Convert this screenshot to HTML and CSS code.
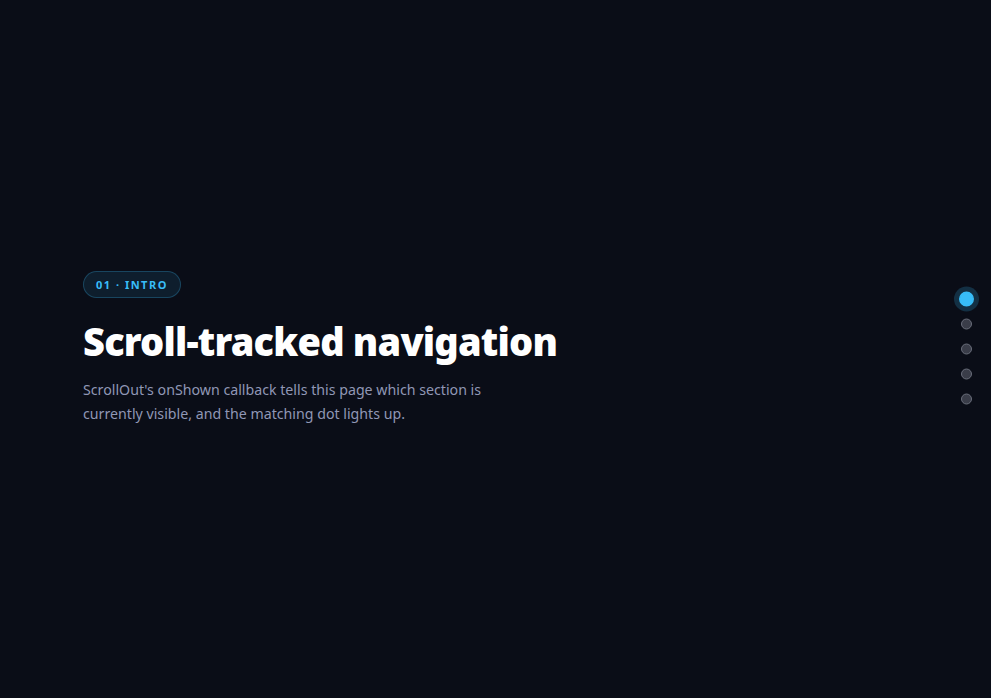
FILE: index.html
```html
<!DOCTYPE html>
<html lang="en">
<head>
<meta charset="utf-8">
<title>Scroll-tracked navigation</title>
<link rel="stylesheet" href="styles.css">
</head>
<body>
<main class="page">
  <section class="section">
    <span class="badge">01 · INTRO</span>
    <h1 class="title">Scroll-tracked navigation</h1>
    <p class="lead">ScrollOut's onShown callback tells this page which section is currently visible, and the matching dot lights up.</p>
  </section>
</main>
<nav class="dots">
  <span class="dot active"></span>
  <span class="dot"></span>
  <span class="dot"></span>
  <span class="dot"></span>
  <span class="dot"></span>
</nav>
</body>
</html>
```

FILE: styles.css
```css
html, body {
  margin: 0;
  padding: 0;
  height: 100%;
  background: #0a0d17;
  font-family: "Noto Sans", "Open Sans", sans-serif;
}
.page {
  height: 100%;
}
.section {
  height: 100%;
  display: flex;
  flex-direction: column;
  justify-content: center;
  align-items: flex-start;
  padding: 0 83px 2px;
  box-sizing: border-box;
}
.badge {
  display: inline-block;
  height: 27px;
  line-height: 25px;
  box-sizing: border-box;
  padding: 0 12px 0 12px;
  border-radius: 999px;
  border: 1px solid rgba(56, 189, 248, 0.25);
  background: rgba(56, 189, 248, 0.1);
  color: #38bdf8;
  font-size: 11px;
  font-weight: 700;
  letter-spacing: 1.5px;
}
.title {
  margin: 20px 0 0;
  color: #ffffff;
  font-family: "Noto Sans", sans-serif;
  font-weight: 900;
  font-size: 38px;
  line-height: 46px;
  letter-spacing: -0.8px;
}
.lead {
  margin: 14px 0 0;
  max-width: 430px;
  color: #9097b5;
  font-size: 14.2px;
  line-height: 24px;
}
.dots {
  position: fixed;
  right: 19px;
  top: 50%;
  transform: translateY(-50%);
  display: flex;
  flex-direction: column;
  align-items: center;
  gap: 14px;
}
.dot {
  display: block;
  width: 11px;
  height: 11px;
  box-sizing: border-box;
  border-radius: 50%;
  background: #3a3d49;
  border: 1px solid #6a6e7b;
}
.dot.active {
  background: #38bdf8;
  border-color: #38bdf8;
  transform: scale(1.36);
  box-shadow: 0 0 0 3.7px rgba(56, 189, 248, 0.2);
}
```
